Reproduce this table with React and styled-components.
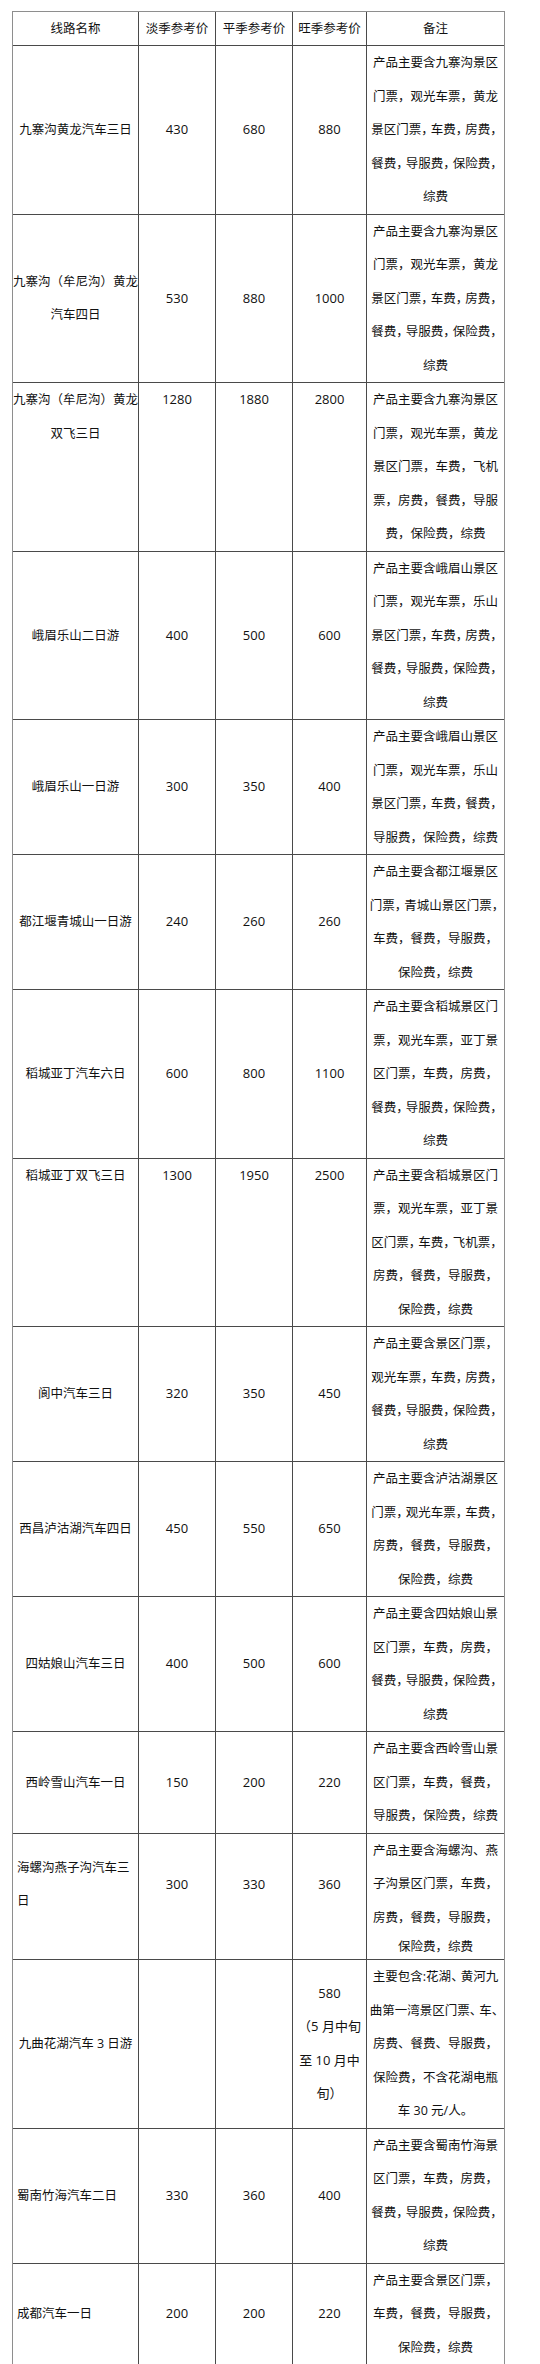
import React from "react";
import styled, { createGlobalStyle } from "styled-components";

const GlobalStyle = createGlobalStyle`
  html, body {
    margin: 0;
    padding: 0;
    background: #fff;
  }
  body {
    font-family: "Open Sans", "Noto Sans CJK SC", sans-serif;
    color: #111;
  }
`;

const Page = styled.div`
  width: 540px;
  min-height: 2364px;
  box-sizing: border-box;
  padding: 11px 0 0 12px;
  background: #fff;
`;

const Table = styled.div`
  width: 493px;
  box-sizing: border-box;
  border: 1px solid #8e8e8e;
  font-size: 12.5px;
`;

const Row = styled.div`
  display: grid;
  grid-template-columns: 125px 77px 77px 74px 138px;
  border-top: 1px solid #4a4a4a;

  &:first-child {
    border-top: none;
  }
`;

const HeadCell = styled.div`
  height: 33px;
  line-height: 33px;
  text-align: center;
  white-space: nowrap;
  border-left: 1px solid #4a4a4a;

  &:first-child {
    border-left: none;
  }
`;

const Cell = styled.div`
  display: flex;
  flex-direction: column;
  justify-content: ${(p) => (p.$top ? "flex-start" : "center")};
  align-items: ${(p) => (p.$left ? "flex-start" : "center")};
  padding: 0 0 ${(p) => (p.$lift ? "24px" : "0")} ${(p) => (p.$left ? "4px" : "0")};
  line-height: 33.5px;
  white-space: nowrap;
  border-left: 1px solid #4a4a4a;

  &:first-child {
    border-left: none;
  }
`;

const PriceCell = styled(Cell)`
  font-size: 13px;
`;

const Line = styled.div`
  line-height: ${(p) => (p.$short ? "25px" : "33.5px")};
`;

const Punct = styled.span`
  letter-spacing: -3px;
`;

const notesJzg = [
  "产品主要含九寨沟景区",
  "门票，观光车票，黄龙",
  "景区门票，车费，房费，",
  "餐费，导服费，保险费，",
  "综费",
];

const rows = [
  { name: ["九寨沟黄龙汽车三日"], prices: ["430", "680", ["880"]], notes: notesJzg },
  { name: ["九寨沟（牟尼沟）黄龙", "汽车四日"], prices: ["530", "880", ["1000"]], notes: notesJzg },
  {
    name: ["九寨沟（牟尼沟）黄龙", "双飞三日"],
    prices: ["1280", "1880", ["2800"]],
    top: true,
    notes: [
      "产品主要含九寨沟景区",
      "门票，观光车票，黄龙",
      "景区门票，车费，飞机",
      "票，房费，餐费，导服",
      "费，保险费，综费",
    ],
  },
  {
    name: ["峨眉乐山二日游"],
    prices: ["400", "500", ["600"]],
    notes: [
      "产品主要含峨眉山景区",
      "门票，观光车票，乐山",
      "景区门票，车费，房费，",
      "餐费，导服费，保险费，",
      "综费",
    ],
  },
  {
    name: ["峨眉乐山一日游"],
    prices: ["300", "350", ["400"]],
    notes: [
      "产品主要含峨眉山景区",
      "门票，观光车票，乐山",
      "景区门票，车费，餐费，",
      "导服费，保险费，综费",
    ],
  },
  {
    name: ["都江堰青城山一日游"],
    prices: ["240", "260", ["260"]],
    notes: [
      "产品主要含都江堰景区",
      "门票，青城山景区门票，",
      "车费，餐费，导服费，",
      "保险费，综费",
    ],
  },
  {
    name: ["稻城亚丁汽车六日"],
    prices: ["600", "800", ["1100"]],
    notes: [
      "产品主要含稻城景区门",
      "票，观光车票，亚丁景",
      "区门票，车费，房费，",
      "餐费，导服费，保险费，",
      "综费",
    ],
  },
  {
    name: ["稻城亚丁双飞三日"],
    prices: ["1300", "1950", ["2500"]],
    top: true,
    notes: [
      "产品主要含稻城景区门",
      "票，观光车票，亚丁景",
      "区门票，车费，飞机票，",
      "房费，餐费，导服费，",
      "保险费，综费",
    ],
  },
  {
    name: ["阆中汽车三日"],
    prices: ["320", "350", ["450"]],
    notes: [
      "产品主要含景区门票，",
      "观光车票，车费，房费，",
      "餐费，导服费，保险费，",
      "综费",
    ],
  },
  {
    name: ["西昌泸沽湖汽车四日"],
    prices: ["450", "550", ["650"]],
    notes: [
      "产品主要含泸沽湖景区",
      "门票，观光车票，车费，",
      "房费，餐费，导服费，",
      "保险费，综费",
    ],
  },
  {
    name: ["四姑娘山汽车三日"],
    prices: ["400", "500", ["600"]],
    notes: [
      "产品主要含四姑娘山景",
      "区门票，车费，房费，",
      "餐费，导服费，保险费，",
      "综费",
    ],
  },
  {
    name: ["西岭雪山汽车一日"],
    prices: ["150", "200", ["220"]],
    notes: ["产品主要含西岭雪山景", "区门票，车费，餐费，", "导服费，保险费，综费"],
  },
  {
    name: ["海螺沟燕子沟汽车三", "日"],
    left: true,
    lift: true,
    shortLast: true,
    prices: ["300", "330", ["360"]],
    notes: [
      "产品主要含海螺沟、燕",
      "子沟景区门票，车费，",
      "房费，餐费，导服费，",
      "保险费，综费",
    ],
  },
  {
    name: ["九曲花湖汽车 3 日游"],
    prices: ["", "", ["580", "（5 月中旬", "至 10 月中", "旬）"]],
    notes: [
      "主要包含:花湖、黄河九",
      "曲第一湾景区门票、车、",
      "房费、餐费、导服费，",
      "保险费，不含花湖电瓶",
      "车 30 元/人。",
    ],
  },
  {
    name: ["蜀南竹海汽车二日"],
    left: true,
    prices: ["330", "360", ["400"]],
    notes: [
      "产品主要含蜀南竹海景",
      "区门票，车费，房费，",
      "餐费，导服费，保险费，",
      "综费",
    ],
  },
  {
    name: ["成都汽车一日"],
    left: true,
    prices: ["200", "200", ["220"]],
    notes: ["产品主要含景区门票，", "车费，餐费，导服费，", "保险费，综费"],
  },
];

function NoteText({ text }) {
  // lines that would overflow get their commas squeezed, as Word does
  if ([...text].length <= 10) return text;
  return text
    .split(/([，、])/)
    .filter(Boolean)
    .map((part, i) => (part === "，" || part === "、" ? <Punct key={i}>{part}</Punct> : part));
}

function App() {
  return (
    <Page>
      <GlobalStyle />
      <Table>
        <Row>
          <HeadCell>线路名称</HeadCell>
          <HeadCell>淡季参考价</HeadCell>
          <HeadCell>平季参考价</HeadCell>
          <HeadCell>旺季参考价</HeadCell>
          <HeadCell>备注</HeadCell>
        </Row>
        {rows.map((r, idx) => (
          <Row key={idx}>
            <Cell $top={r.top} $left={r.left} $lift={r.lift}>
              {r.name.map((n, i) => (
                <Line key={i}>{n}</Line>
              ))}
            </Cell>
            <PriceCell $top={r.top} $lift={r.lift}>{r.prices[0]}</PriceCell>
            <PriceCell $top={r.top} $lift={r.lift}>{r.prices[1]}</PriceCell>
            <PriceCell $top={r.top} $lift={r.lift}>
              {r.prices[2].map((p, i) => (
                <Line key={i}>{p}</Line>
              ))}
            </PriceCell>
            <Cell $top={r.top}>
              {r.notes.map((n, i) => (
                <Line key={i} $short={r.shortLast && i === r.notes.length - 1}>
                  <NoteText text={n} />
                </Line>
              ))}
            </Cell>
          </Row>
        ))}
      </Table>
    </Page>
  );
}

export default App;
